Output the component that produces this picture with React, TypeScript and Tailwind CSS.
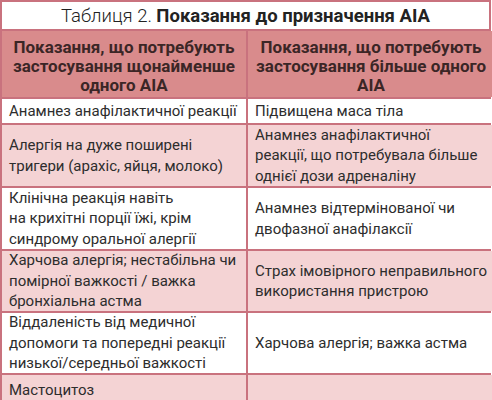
import React from "react";

const leftLines: string[][] = [
  ["Анамнез анафілактичної реакції"],
  ["Алергія на дуже поширені", "тригери (арахіс, яйця, молоко)"],
  ["Клінічна реакція навіть", "на крихітні порції їжі, крім", "синдрому оральної алергії"],
  ["Харчова алергія; нестабільна чи", "помірної важкості / важка", "бронхіальна астма"],
  ["Віддаленість від медичної", "допомоги та попередні реакції", "низької/середньої важкості"],
  ["Мастоцитоз"],
];
const rightLines: string[][] = [
  ["Підвищена маса тіла"],
  ["Анамнез анафілактичної", "реакції, що потребувала більше", "однієї дози адреналіну"],
  ["Анамнез відтермінованої чи", "двофазної анафілаксії"],
  ["Страх імовірного неправильного", "використання пристрою"],
  ["Харчова алергія; важка астма"],
  [""],
];

const heights = ["h-[24px]", "h-[61px]", "h-[61px]", "h-[60px]", "h-[60px]", "h-[30px]"];

export default function App() {
  return (
    <div className="w-[492px] h-[400px] overflow-hidden bg-white" style={{ fontFamily: "Roboto, 'Noto Sans', sans-serif" }}>
      <div className="w-[491px] border-2 border-[#c9727e] bg-[#c9727e]">
        <div className="h-[27px] bg-white flex items-center justify-center text-[18.5px] leading-none text-[#222] pt-[1px] whitespace-nowrap">
          <span className="font-light">Таблиця 2.&nbsp;</span>
          <span className="font-bold">Показання до призначення AIA</span>
        </div>
        <div className="grid grid-cols-[244px_1fr] gap-[2px] mt-[2px]">
          <div className="h-[66px] bg-[#d98b8c] flex items-start justify-center pt-[7px] text-center font-bold text-[17px] leading-[19px] text-[#3b2626] whitespace-nowrap">
            <div>
              Показання, що потребують
              <br />
              застосування щонайменше
              <br />
              одного AIA
            </div>
          </div>
          <div className="h-[66px] bg-[#d98b8c] flex items-start justify-center pt-[7px] text-center font-bold text-[17px] leading-[19px] text-[#3b2626] whitespace-nowrap">
            <div>
              Показання, що потребують
              <br />
              застосування більше одного
              <br />
              AIA
            </div>
          </div>
          {leftLines.map((l, i) => (
            <React.Fragment key={i}>
              <div
                className={`${heights[i]} ${i % 2 === 1 ? "bg-[#f4d3d4]" : "bg-white"} flex items-center px-[7px] text-[15px] leading-[20.5px] text-[#2d2d2d] whitespace-nowrap`}
              >
                <div>
                  {l.map((t, j) => (
                    <div key={j}>{t}</div>
                  ))}
                </div>
              </div>
              <div
                className={`${heights[i]} ${i % 2 === 1 ? "bg-[#f4d3d4]" : "bg-white"} flex items-center px-[7px] text-[15px] leading-[20.5px] text-[#2d2d2d] whitespace-nowrap`}
              >
                <div>
                  {rightLines[i].map((t, j) => (
                    <div key={j}>{t}</div>
                  ))}
                </div>
              </div>
            </React.Fragment>
          ))}
        </div>
      </div>
    </div>
  );
}
